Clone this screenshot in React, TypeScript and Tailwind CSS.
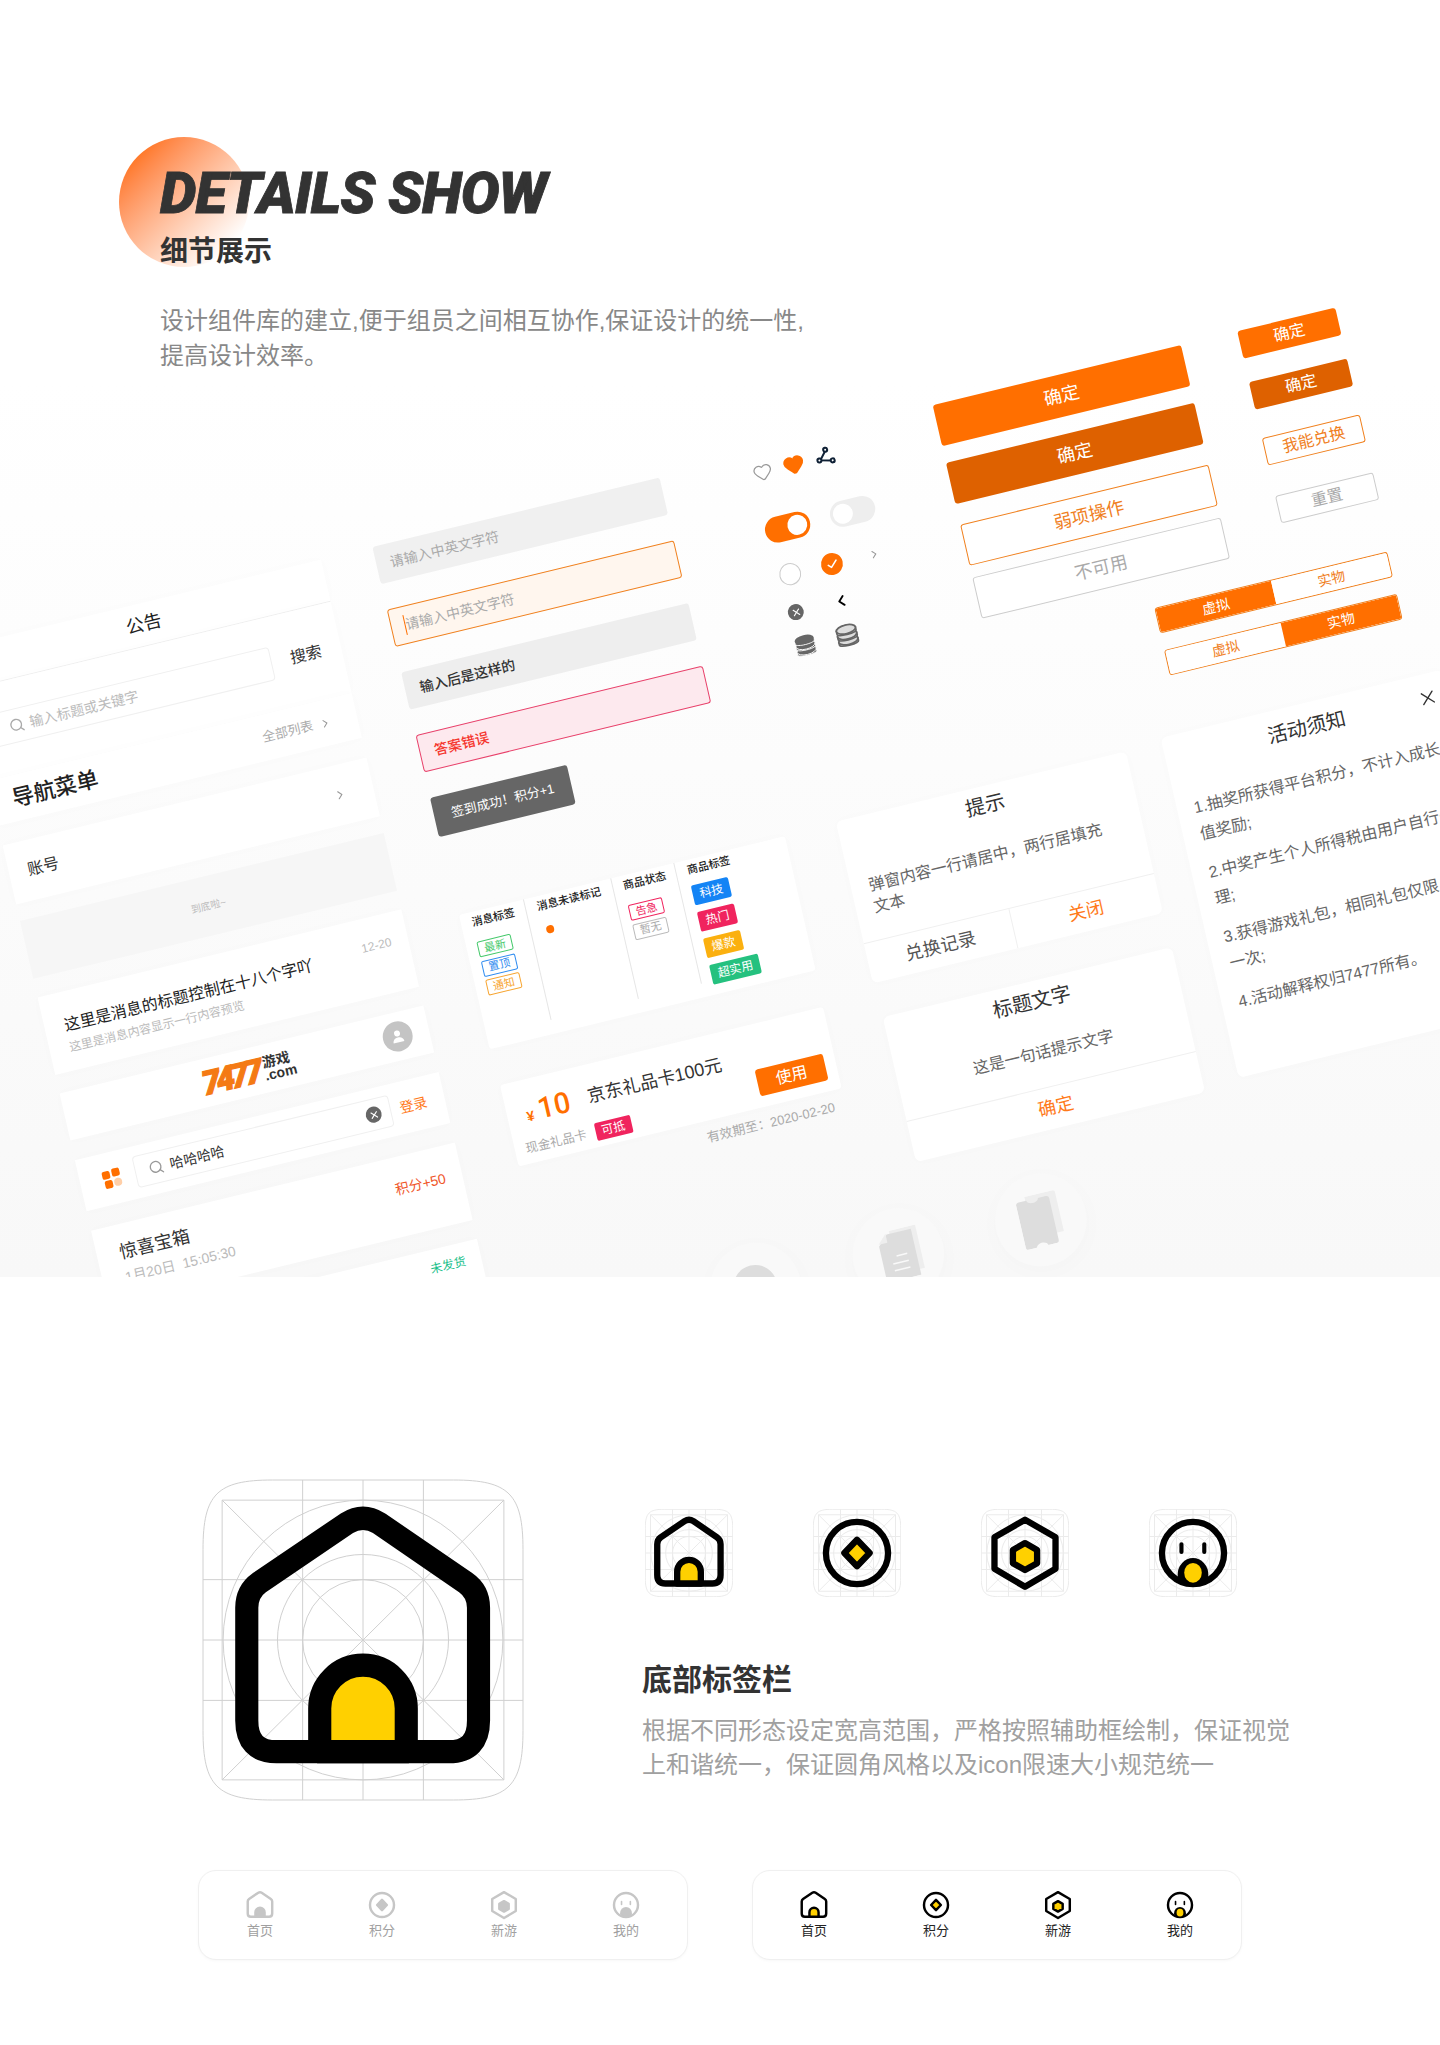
import React from 'react';
import { ChevronLeft, ChevronRight, Check, Heart, Search, X } from 'lucide-react';

type IconKind = 'home' | 'points' | 'games' | 'me';

const GridLines: React.FC<{ color: string }> = ({ color }) => (
  <g fill="none" stroke={color}>
    <path
      vectorEffect="non-scaling-stroke"
      d="M70 1H250C305 1 319 15 319 70V250C319 305 305 319 250 319H70C15 319 1 305 1 250V70C1 15 15 1 70 1Z"
    />
    <path
      vectorEffect="non-scaling-stroke"
      d="M20 21H300V299H20ZM1 100H319M1 160H319M1 220H319M100 1V319M160 1V319M220 1V319M20 21L300 299M300 21L20 299"
    />
    <circle vectorEffect="non-scaling-stroke" cx="160" cy="160" r="60" />
    <circle vectorEffect="non-scaling-stroke" cx="160" cy="160" r="85" />
    <circle vectorEffect="non-scaling-stroke" cx="160" cy="160" r="139" />
  </g>
);

const TabGlyph: React.FC<{ kind: IconKind; line: string; fill: string }> = ({ kind, line, fill }) => {
  if (kind === 'home') {
    return (
      <g fill="none" stroke={line} strokeWidth="23" strokeLinejoin="round">
        <path d="M44.5 128Q44.5 112 57 103L144 44Q160 34 176 44L262 103Q274.8 112 274.8 128V240Q274.8 271 245 271H74Q44.5 271 44.5 240Z" />
        <path fill={fill} d="M117 271V228A43 43 0 0 1 203 228V271Z" />
      </g>
    );
  }
  if (kind === 'points') {
    return (
      <g stroke={line} strokeWidth="23" strokeLinejoin="round">
        <circle cx="160" cy="160" r="113" fill="none" />
        <path fill={fill} d="M160 112L206 160L160 208L114 160Z" />
      </g>
    );
  }
  if (kind === 'games') {
    return (
      <g stroke={line} strokeWidth="23" strokeLinejoin="round">
        <path fill="none" d="M160 39L271 103V217L160 283L49 217V103Z" />
        <path fill={fill} d="M160 124L204 149V197L160 222L116 197V149Z" />
      </g>
    );
  }
  return (
    <g>
      <clipPath id={`face-${line.slice(1)}`}>
        <circle cx="160" cy="160" r="120" />
      </clipPath>
      <ellipse cx="160" cy="240" rx="56" ry="62" fill={line} clipPath={`url(#face-${line.slice(1)})`} />
      <circle cx="160" cy="160" r="113" fill="none" stroke={line} strokeWidth="23" />
      <ellipse cx="160" cy="232" rx="32" ry="36" fill={fill} />
      <path d="M118 128V156M201 128V156" stroke={line} strokeWidth="15" strokeLinecap="round" />
    </g>
  );
};

const TabIcon: React.FC<{
  kind: IconKind;
  size: string;
  line?: string;
  fill?: string;
  grid?: string;
}> = ({ kind, size, line = '#000000', fill = '#ffd000', grid }) => (
  <svg viewBox="0 0 320 320" className={size}>
    {grid && <GridLines color={grid} />}
    <TabGlyph kind={kind} line={line} fill={fill} />
  </svg>
);

const tabs: { kind: IconKind; label: string }[] = [
  { kind: 'home', label: '首页' },
  { kind: 'points', label: '积分' },
  { kind: 'games', label: '新游' },
  { kind: 'me', label: '我的' },
];

const TabBar: React.FC<{ active?: boolean }> = ({ active }) => (
  <div className="grid h-[90px] w-[490px] grid-cols-4 rounded-[18px] border border-[#f0f0f0] bg-white pt-[17px] shadow-[0_1px_3px_rgba(0,0,0,0.03)]">
    {tabs.map((tab) => (
      <div key={tab.kind} className="flex flex-col items-center">
        <TabIcon
          kind={tab.kind}
          size="h-[34px] w-[34px]"
          line={active ? '#000000' : '#c6c6c6'}
          fill={active ? '#ffd000' : '#c6c6c6'}
        />
        <span className={`text-[13px] leading-[18px] ${active ? 'text-[#222222]' : 'text-[#a0a0a0]'}`}>{tab.label}</span>
      </div>
    ))}
  </div>
);

const Coins: React.FC<{ outline?: boolean }> = ({ outline }) => (
  <svg viewBox="0 0 22 22" className="h-[24px] w-[24px]">
    {[15, 10, 5].map((cy, i) => (
      <g key={cy}>
        <path
          d={`M2 ${cy}V${cy + 2.5}C2 ${cy + 5.5} 20 ${cy + 5.5} 20 ${cy + 2.5}V${cy}Z`}
          fill={outline ? '#dddddd' : '#666666'}
          stroke={outline ? '#666666' : '#ffffff'}
          strokeWidth={outline ? 1.6 : 0.8}
        />
        <ellipse
          cx="11"
          cy={cy}
          rx="9"
          ry="4"
          fill={outline ? '#dddddd' : '#666666'}
          stroke={outline ? '#666666' : '#ffffff'}
          strokeWidth={outline ? 1.6 : i === 2 ? 0 : 0.8}
        />
      </g>
    ))}
  </svg>
);

const ClearDot: React.FC = () => (
  <span className="flex h-[16px] w-[16px] items-center justify-center rounded-full bg-[#666666]">
    <X size={11} color="#ffffff" strokeWidth={2.5} />
  </span>
);

const Logo: React.FC = () => (
  <div className="flex items-center gap-[2px] pl-[4px]">
    <span className="font-['Roboto',sans-serif] text-[33px] leading-none font-black tracking-[-4px] text-[#f47a14] italic [-webkit-text-stroke:1.2px_#f47a14]">7477</span>
    <span className="flex flex-col pl-[3px] text-[#333333]">
      <span className="text-[14px] leading-[14px] font-bold">游戏</span>
      <span className="text-[14px] leading-[13px] font-bold">.com</span>
    </span>
  </div>
);

const Card: React.FC<{ className?: string; children?: React.ReactNode }> = ({ className = '', children }) => (
  <div className={`bg-white shadow-[0_0_12px_rgba(0,0,0,0.015)] ${className}`}>{children}</div>
);

const LeftColumn: React.FC = () => (
  <div className="absolute top-[616px] left-[-187px] flex w-[375px] flex-col">
    <Card className="flex h-[43px] items-center justify-center border-b border-[#f0f0f0] text-[18px] text-[#222222]">公告</Card>
    <Card className="flex h-[93px] items-start gap-[19px] pt-[29px] pl-[16px]">
      <div className="flex h-[34px] w-[288px] items-center gap-[5px] rounded-[4px] border border-[#f0f0f0] pl-[16px] text-[14px] text-[#bbbbbb]">
        <Search size={16} color="#aaaaaa" />
        输入标题或关键字
      </div>
      <span className="text-[16px] leading-[34px] text-[#333333]">搜索</span>
    </Card>
    <Card className="flex h-[46px] items-center justify-between pr-[26px] pl-[20px]">
      <span className="text-[22px] font-medium text-[#222222]">导航菜单</span>
      <span className="flex items-center gap-[6px] text-[13px] text-[#aaaaaa]">
        全部列表
        <ChevronRight size={13} color="#999999" />
      </span>
    </Card>
    <Card className="mt-[20px] flex h-[60px] items-center justify-between pr-[27px] pl-[19px] text-[16px] text-[#333333]">
      账号
      <ChevronRight size={14} color="#999999" />
    </Card>
    <div className="mt-[17px] flex h-[59px] items-center justify-center bg-[#f6f6f6] text-[10px] text-[#bbbbbb]">到底啦~</div>
    <Card className="mt-[19px] h-[79px] pt-[22px] pr-[17px] pl-[20px]">
      <div className="flex items-start justify-between">
        <span className="text-[16px] leading-[24px] text-[#222222]">这里是消息的标题控制在十八个字吖</span>
        <span className="text-[12px] leading-[14px] text-[#bbbbbb]">12-20</span>
      </div>
      <p className="text-[12px] leading-[20px] text-[#bbbbbb]">这里是消息内容显示一行内容预览</p>
    </Card>
    <Card className="relative mt-[19px] flex h-[48px] items-center justify-center">
      <Logo />
      <span className="absolute top-[9px] right-[17px] flex h-[30px] w-[30px] items-center justify-center rounded-full bg-[#c4c4c4]">
        <svg viewBox="0 0 16 16" className="h-[16px] w-[16px]" fill="#ffffff">
          <circle cx="8" cy="5" r="3" />
          <path d="M2.5 14C2.5 10.5 5 9 8 9S13.5 10.5 13.5 14Z" />
        </svg>
      </span>
    </Card>
    <Card className="mt-[20px] flex h-[52px] items-center pl-[22px]">
      <svg viewBox="0 0 20 20" className="h-[20px] w-[20px]">
        <rect x="1" y="2" width="8" height="8" rx="2" fill="#ff6f00" />
        <rect x="11" y="1" width="8" height="8" rx="2" fill="#ff6f00" />
        <rect x="2" y="11.5" width="8" height="8" rx="2" fill="#ff6f00" />
        <rect x="11.5" y="11" width="8" height="8" rx="4" fill="#ffcfa8" />
      </svg>
      <div className="ml-[14px] flex h-[32px] w-[264px] items-center gap-[6px] rounded-[4px] border border-[#f0f0f0] pr-[9px] pl-[13px] text-[14px] text-[#333333]">
        <Search size={16} color="#999999" />
        <span className="flex-1">哈哈哈哈</span>
        <ClearDot />
      </div>
      <span className="ml-[9px] text-[14px] text-[#ff7a1a]">登录</span>
    </Card>
    <Card className="mt-[20px] flex h-[79px] justify-between pt-[14px] pr-[17px] pl-[23px]">
      <div>
        <p className="text-[18px] leading-[28px] text-[#333333]">惊喜宝箱</p>
        <p className="text-[14px] leading-[22px] whitespace-pre text-[#bbbbbb]">1月20日  15:05:30</p>
      </div>
      <span className="pt-[8px] text-[14px] text-[#f0562a]">积分+50</span>
    </Card>
    <Card className="mt-[19px] flex h-[80px] justify-end pt-[10px] pr-[16px] text-[12px] text-[#19c08a]">未发货</Card>
  </div>
);

const InputColumn: React.FC = () => (
  <div className="absolute top-[616px] left-[241px] flex w-[296px] flex-col gap-[26px] text-[14px]">
    <div className="flex h-[38px] items-center rounded-[3px] bg-[#f0f0f0] pl-[14px] text-[#aaaaaa]">请输入中英文字符</div>
    <div className="flex h-[38px] items-center rounded-[3px] border border-[#f0801e] bg-[#fff6ee] pl-[13px] text-[#aaaaaa]">
      <span className="h-[20px] w-px bg-[#ff6f00]" />
      请输入中英文字符
    </div>
    <div className="flex h-[38px] items-center rounded-[3px] bg-[#eeeeee] pl-[15px] font-medium text-[#333333]">输入后是这样的</div>
    <div className="flex h-[38px] items-center rounded-[3px] border border-[#e8406a] bg-[#fde9ee] pl-[14px] font-medium text-[#f5372f]">答案错误</div>
    <div className="flex h-[40px] w-[141px] items-center justify-center rounded-[3px] bg-[#666666] text-[13px] text-white">签到成功！积分+1</div>
  </div>
);

const IconColumn: React.FC = () => (
  <div className="absolute top-[625px] left-[628px] flex flex-col">
    <div className="flex h-[20px] items-center gap-[10px]">
      <span className="flex w-[22px] justify-center">
        <Heart size={20} color="#999999" strokeWidth={1.5} />
      </span>
      <span className="flex w-[22px] justify-center">
        <Heart size={22} color="#ff6f00" fill="#ff6f00" />
      </span>
      <svg viewBox="0 0 22 22" className="h-[22px] w-[22px]" fill="none" stroke="#0f2035" strokeWidth="2">
        <path d="M12 6L6 13L17 16" />
        <circle cx="13" cy="4" r="2" fill="#ffffff" />
        <circle cx="5" cy="13" r="2" fill="#ffffff" />
        <circle cx="18" cy="16" r="2" fill="#ffffff" />
      </svg>
    </div>
    <div className="mt-[36px] flex items-center gap-[21px]">
      <span className="flex h-[26px] w-[46px] items-center justify-end rounded-full bg-[#ff6f00] pr-[3px]">
        <span className="h-[20px] w-[20px] rounded-full bg-white" />
      </span>
      <span className="flex h-[26px] w-[46px] items-center rounded-full bg-[#eeeeee] pl-[3px]">
        <span className="h-[20px] w-[20px] rounded-full bg-white" />
      </span>
    </div>
    <div className="mt-[21px] ml-[4px] flex h-[24px] items-center gap-[21px]">
      <span className="h-[22px] w-[22px] rounded-full border border-[#cccccc] bg-white" />
      <span className="flex h-[22px] w-[22px] items-center justify-center rounded-full bg-[#ff6f00]">
        <Check size={13} color="#ffffff" strokeWidth={3} />
      </span>
      <span className="flex w-[22px] justify-center">
        <ChevronRight size={13} color="#999999" />
      </span>
    </div>
    <div className="mt-[18px] ml-[4px] flex h-[16px] items-center gap-[30px]">
      <ClearDot />
      <ChevronLeft size={18} color="#000000" strokeWidth={2.5} />
    </div>
    <div className="mt-[15px] ml-[2px] flex h-[24px] items-center gap-[19px]">
      <Coins />
      <Coins outline />
    </div>
  </div>
);

const BigButtons: React.FC = () => (
  <div className="absolute top-[610px] left-[820px] flex w-[256px] flex-col text-[18px]">
    <div className="flex h-[42px] items-center justify-center rounded-[3px] bg-[#ff6f00] text-white">确定</div>
    <div className="mt-[17px] flex h-[42px] items-center justify-center rounded-[3px] bg-[#de6100] text-white">确定</div>
    <div className="mt-[21px] flex h-[42px] items-center justify-center rounded-[3px] border border-[#f0801e] bg-white text-[#f0801e]">弱项操作</div>
    <div className="mt-[12px] flex h-[42px] items-center justify-center rounded-[3px] border border-[#cccccc] bg-white text-[#aaaaaa]">不可用</div>
  </div>
);

const SmallButtons: React.FC = () => (
  <div className="absolute top-[610px] left-[1134px] flex w-[101px] flex-col text-[16px]">
    <div className="flex h-[28px] items-center justify-center rounded-[3px] bg-[#ff6f00] text-white">确定</div>
    <div className="mt-[24px] flex h-[28px] items-center justify-center rounded-[3px] bg-[#de6100] text-white">确定</div>
    <div className="mt-[29px] flex h-[28px] items-center justify-center rounded-[3px] border border-[#f0801e] bg-white text-[#f0801e]">我能兑换</div>
    <div className="mt-[31px] flex h-[28px] items-center justify-center rounded-[3px] border border-[#cccccc] bg-white text-[#aaaaaa]">重置</div>
  </div>
);

const Segments: React.FC = () => (
  <div className="absolute top-[858px] left-[991px] flex w-[240px] flex-col gap-[17px] text-[14px]">
    <div className="flex h-[26px] overflow-hidden rounded-[3px] border border-[#f0801e]">
      <span className="flex flex-1 items-center justify-center bg-[#ff6f00] text-white">虚拟</span>
      <span className="flex flex-1 items-center justify-center bg-white text-[#f0801e]">实物</span>
    </div>
    <div className="flex h-[26px] overflow-hidden rounded-[3px] border border-[#f0801e]">
      <span className="flex flex-1 items-center justify-center bg-white text-[#f0801e]">虚拟</span>
      <span className="flex flex-1 items-center justify-center bg-[#ff6f00] text-white">实物</span>
    </div>
  </div>
);

const OutlineTag: React.FC<{ label: string; color: string }> = ({ label, color }) => (
  <span
    className={`flex h-[16px] w-[35px] items-center justify-center rounded-[2px] border text-[11px] leading-none ${color}`}
  >
    {label}
  </span>
);

const SolidTag: React.FC<{ label: string; color: string; width: string }> = ({ label, color, width }) => (
  <span className={`flex h-[20px] items-center justify-center rounded-[2px] text-[12px] text-white ${color} ${width}`}>{label}</span>
);

const TagsCard: React.FC = () => (
  <Card className="absolute top-[992px] left-[243px] flex h-[137px] w-[336px] items-start rounded-[3px] text-[11px] leading-[20px] font-medium text-[#222222]">
    <div className="h-[123px] w-[67px] border-r border-[#e6e6e6] pl-[11px]">
      <p>消息标签</p>
      <div className="mt-[10px] flex flex-col gap-[3.5px] font-normal">
        <OutlineTag label="最新" color="border-[#45c96b] text-[#45c96b]" />
        <OutlineTag label="置顶" color="border-[#2f8cf0] text-[#2f8cf0]" />
        <OutlineTag label="通知" color="border-[#f7a531] text-[#f7a531]" />
      </div>
    </div>
    <div className="h-[123px] w-[90px] border-r border-[#e6e6e6] pl-[11px]">
      <p>消息未读标记</p>
      <span className="mt-[11px] ml-[4px] block h-[8px] w-[8px] rounded-full bg-[#ff6f00]" />
    </div>
    <div className="h-[123px] w-[65px] border-r border-[#e6e6e6] pl-[10px]">
      <p>商品状态</p>
      <div className="mt-[10px] flex flex-col gap-[3.5px] font-normal">
        <OutlineTag label="告急" color="border-[#f0245e] text-[#f0245e]" />
        <OutlineTag label="暂无" color="border-[#bbbbbb] text-[#aaaaaa]" />
      </div>
    </div>
    <div className="pl-[11px]">
      <p>商品标签</p>
      <div className="mt-[6px] flex flex-col gap-[7px] font-normal">
        <SolidTag label="科技" color="bg-[#1484f5]" width="w-[38px]" />
        <SolidTag label="热门" color="bg-[#f0245e]" width="w-[38px]" />
        <SolidTag label="爆款" color="bg-[#fbb00f]" width="w-[38px]" />
        <SolidTag label="超实用" color="bg-[#25c17f]" width="w-[50px]" />
      </div>
    </div>
  </Card>
);

const CouponCard: React.FC = () => (
  <div className="absolute top-[1166px] left-[245px] w-[333px]">
    <Card className="flex h-[83px] items-start rounded-[3px] pt-[17px] pl-[11px]">
      <div className="flex w-[72px] shrink-0 flex-col whitespace-nowrap">
        <div className="flex h-[30px] items-baseline gap-[5px] pl-[8px] text-[#ff6f00]">
          <span className="text-[14px] font-bold">¥</span>
          <span className="font-['Roboto',sans-serif] text-[29px] leading-[30px] font-medium">10</span>
        </div>
        <div className="mt-[12px] flex items-center">
          <span className="text-[12.5px] text-[#aaaaaa]">现金礼品卡</span>
          <span className="ml-[9px] flex h-[18px] w-[37px] shrink-0 items-center justify-center rounded-[2px] bg-[#f0245e] text-[12px] text-white">可抵</span>
        </div>
      </div>
      <div className="flex flex-1 items-start justify-between pr-[11px]">
        <span className="text-[18px] leading-[30px] whitespace-nowrap text-[#333333]">京东礼品卡100元</span>
        <span className="mt-[28px] flex h-[27px] w-[70px] shrink-0 items-center justify-center rounded-[3px] bg-[#ff6f00] text-[16px] text-white">使用</span>
      </div>
    </Card>
    <p className="mt-[7px] pr-[11px] text-right text-[13px] text-[#aaaaaa]">有效期至：2020-02-20</p>
  </div>
);

const TipDialog: React.FC = () => (
  <Card className="absolute top-[990px] left-[632px] flex h-[165px] w-[299px] flex-col rounded-[6px]">
    <p className="pt-[6px] text-center text-[20px] leading-[26px] text-[#333333]">提示</p>
    <p className="flex-1 px-[18px] pt-[27px] text-[16px] leading-[22px] text-[#666666]">
      弹窗内容一行请居中，两行居填充
      <br />
      文本
    </p>
    <div className="flex h-[41px] border-t border-[#f0f0f0] text-[18px]">
      <span className="flex flex-1 items-center justify-center border-r border-[#f0f0f0] text-[#555555]">兑换记录</span>
      <span className="flex flex-1 items-center justify-center text-[#ff7a1a]">关闭</span>
    </div>
  </Card>
);

const TitleDialog: React.FC = () => (
  <Card className="absolute top-[1190px] left-[634px] flex h-[148px] w-[298px] flex-col rounded-[6px]">
    <p className="pt-[5px] text-center text-[20px] leading-[30px] text-[#333333]">标题文字</p>
    <p className="flex-1 pt-[25px] text-center text-[16px] leading-[24px] text-[#666666]">这是一句话提示文字</p>
    <div className="flex h-[42px] items-center justify-center border-t border-[#f0f0f0] text-[18px] text-[#ff7a1a]">确定</div>
  </Card>
);

const notes = [
  ['1.抽奖所获得平台积分，不计入成长', '值奖励;'],
  ['2.中奖产生个人所得税由用户自行处', '理;'],
  ['3.获得游戏礼包，相同礼包仅限', '一次;'],
  ['4.活动解释权归7477所有。'],
];

const RulesDialog: React.FC = () => (
  <Card className="absolute top-[985px] left-[968px] h-[347px] w-[290px] rounded-[6px] px-[17px]">
    <div className="relative pt-[9px] text-center text-[20px] leading-[30px] text-[#333333]">
      活动须知
      <X size={22} color="#333333" strokeWidth={1.5} className="absolute top-[13px] right-[-8px]" />
    </div>
    <div className="mt-[23px] flex flex-col gap-[12px] text-[16px] leading-[27px] whitespace-nowrap text-[#666666]">
      {notes.map((lines) => (
        <p key={lines[0]}>
          {lines.map((line) => (
            <span key={line} className="block">
              {line}
            </span>
          ))}
        </p>
      ))}
    </div>
  </Card>
);

const discClass =
  'flex h-[92px] w-[92px] rounded-full bg-[#f9f9f9] shadow-[0_4px_24px_rgba(0,0,0,0.02)] items-center justify-center';

const FloatingDiscs: React.FC = () => (
  <div className="absolute top-[1377px] left-[403px] flex gap-[55px]">
    <span className={discClass}>
      <span className="mb-[4px] h-[44px] w-[44px] rounded-full bg-[#dddddd]" />
    </span>
    <span className={discClass}>
      <svg viewBox="0 0 42 50" className="ml-[5px] h-[50px] w-[42px]">
        <path d="M14 0H41V44H14Z" fill="#eeeeee" />
        <path d="M11 3H36V50H1V13Z" fill="#dddddd" />
        <path d="M1 11L10 2V11Z" fill="#eeeeee" />
        <path d="M11 33H27M11 40H27M16 26H27" stroke="#f9f9f9" strokeWidth="1.5" />
      </svg>
    </span>
    <span className={discClass}>
      <svg viewBox="0 0 42 52" className="h-[52px] w-[42px]">
        <path d="M10 0H38C40 0 41 1 41 3V42H10Z" fill="#eeeeee" />
        <path d="M3 4H11C12 9 22 9 23 4H31C33 4 34 5 34 7V49C34 51 33 52 31 52H23C22 47 12 47 11 52H3C1 52 0 51 0 49V7C0 5 1 4 3 4Z" fill="#dddddd" />
      </svg>
    </span>
  </div>
);

const App: React.FC = () => {
  return (
    <div className="min-h-[2045px] w-[1440px] overflow-hidden bg-white font-['Liberation_Sans','Noto_Sans_CJK_SC',sans-serif]">
      <section className="relative h-[1277px] overflow-hidden bg-gradient-to-b from-white from-30% to-[#f8f8f8]">
        <div className="absolute inset-0 origin-top-left [transform:matrix(0.97,-0.235,0.225,0.98,0,0)]">
          <LeftColumn />
          <InputColumn />
          <IconColumn />
          <BigButtons />
          <SmallButtons />
          <Segments />
          <TagsCard />
          <CouponCard />
          <TipDialog />
          <TitleDialog />
          <RulesDialog />
          <FloatingDiscs />
        </div>
        <div className="relative pt-[137px] pl-[119px]">
          <span className="absolute top-[137px] left-[119px] h-[130px] w-[130px] rounded-full bg-gradient-to-br from-[#ff6f00] from-10% to-white to-85%" />
          <div className="relative pl-[41px]">
            <h1 className="pt-[24px] font-['Roboto',sans-serif] text-[58px] leading-[64px] font-black tracking-[-1px] text-[#333333] italic [-webkit-text-stroke:0.8px_#333333]">DETAILS SHOW</h1>
            <h2 className="mt-[9px] text-[28px] leading-[36px] font-semibold text-[#333333]">细节展示</h2>
            <p className="mt-[33px] text-[24px] leading-[35px] text-[#888888]">
              设计组件库的建立,便于组员之间相互协作,保证设计的统一性,
              <br />
              提高设计效率。
            </p>
          </div>
        </div>
      </section>

      <section className="flex pt-[202px] pl-[202px]">
        <TabIcon kind="home" size="h-[322px] w-[322px]" grid="#d0d0d0" />
        <div className="ml-[118px] pt-[30px]">
          <div className="ml-[3px] flex gap-[80px]">
            {tabs.map((tab) => (
              <TabIcon key={tab.kind} kind={tab.kind} size="h-[88px] w-[88px]" grid="#ebebeb" />
            ))}
          </div>
          <h3 className="mt-[63px] text-[30px] leading-[40px] font-semibold text-[#333333]">底部标签栏</h3>
          <p className="mt-[14px] text-[24px] leading-[34px] whitespace-nowrap text-[#a0a0a0]">
            根据不同形态设定宽高范围，严格按照辅助框绘制，保证视觉
            <br />
            上和谐统一，保证圆角风格以及icon限速大小规范统一
          </p>
        </div>
      </section>

      <section className="flex gap-[64px] pt-[69px] pl-[198px]">
        <TabBar />
        <TabBar active />
      </section>
    </div>
  );
};

export default App;
